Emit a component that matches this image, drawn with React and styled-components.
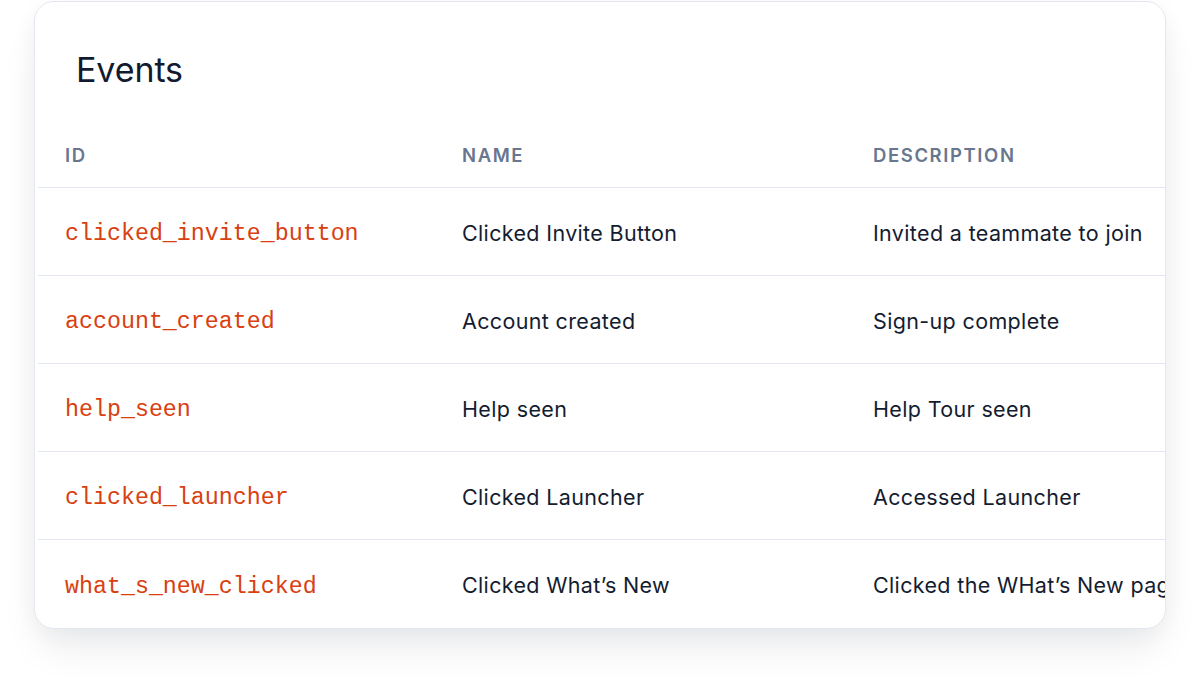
import React from "react";
import styled, { createGlobalStyle } from "styled-components";

const Global = createGlobalStyle`
  html, body { margin: 0; padding: 0; background: #ffffff; }
  body { font-family: Inter, "Noto Sans", sans-serif; }
  * { box-sizing: border-box; }
`;

const Page = styled.div`
  width: 1200px;
  height: 698px;
  padding: 1px 0 0 34px;
  overflow: hidden;
`;

const Card = styled.section`
  width: 1132px;
  height: 628px;
  background: #ffffff;
  border: 1px solid #e3e8f0;
  border-radius: 20px;
  box-shadow: 0 24px 40px -8px rgba(15, 23, 42, 0.09), 0 4px 24px rgba(15, 23, 42, 0.04);
  overflow: hidden;
  padding-left: 3px;
`;

const Title = styled.h2`
  margin: 48px 0 30px 38px;
  font-family: Inter, sans-serif;
  font-size: 34px;
  line-height: 40px;
  font-weight: 400;
  color: #111a2e;
  letter-spacing: -0.1px;
`;

const Table = styled.div`
  width: 1400px;
`;

const Row = styled.div`
  display: grid;
  grid-template-columns: 397px 411px 1fr;
  height: ${(p) => (p.$head ? "68px" : "88px")};
  padding-top: 2px;
  align-items: center;
  border-bottom: 1px solid #e3e8f0;
  &:last-child { border-bottom: none; }
`;

const HeadCell = styled.div`
  padding-left: 27px;
  font-family: Inter, sans-serif;
  font-size: 18.5px;
  font-weight: 600;
  letter-spacing: 1.6px;
  text-transform: uppercase;
  color: #68778e;
`;

const IdCell = styled.div`
  padding: 3px 0 0 27px;
  font-family: "Liberation Mono", "DejaVu Sans Mono", monospace;
  font-size: 23.3px;
  color: #d8400f;
  white-space: nowrap;
`;

const TextCell = styled.div`
  padding-left: 27px;
  font-family: Inter, sans-serif;
  font-size: 21.5px;
  letter-spacing: 0.35px;
  color: #141c30;
  white-space: nowrap;
`;

const events = [
  ["clicked_invite_button", "Clicked Invite Button", "Invited a teammate to join"],
  ["account_created", "Account created", "Sign-up complete"],
  ["help_seen", "Help seen", "Help Tour seen"],
  ["clicked_launcher", "Clicked Launcher", "Accessed Launcher"],
  ["what_s_new_clicked", "Clicked What\u2019s New", "Clicked the WHat\u2019s New page"],
];

export default function App() {
  return (
    <>
      <Global />
      <Page>
        <Card>
          <Title>Events</Title>
          <Table>
            <Row $head>
              <HeadCell>ID</HeadCell>
              <HeadCell>Name</HeadCell>
              <HeadCell>Description</HeadCell>
            </Row>
            {events.map(([id, name, desc]) => (
              <Row key={id}>
                <IdCell>{id}</IdCell>
                <TextCell>{name}</TextCell>
                <TextCell>{desc}</TextCell>
              </Row>
            ))}
          </Table>
        </Card>
      </Page>
    </>
  );
}
